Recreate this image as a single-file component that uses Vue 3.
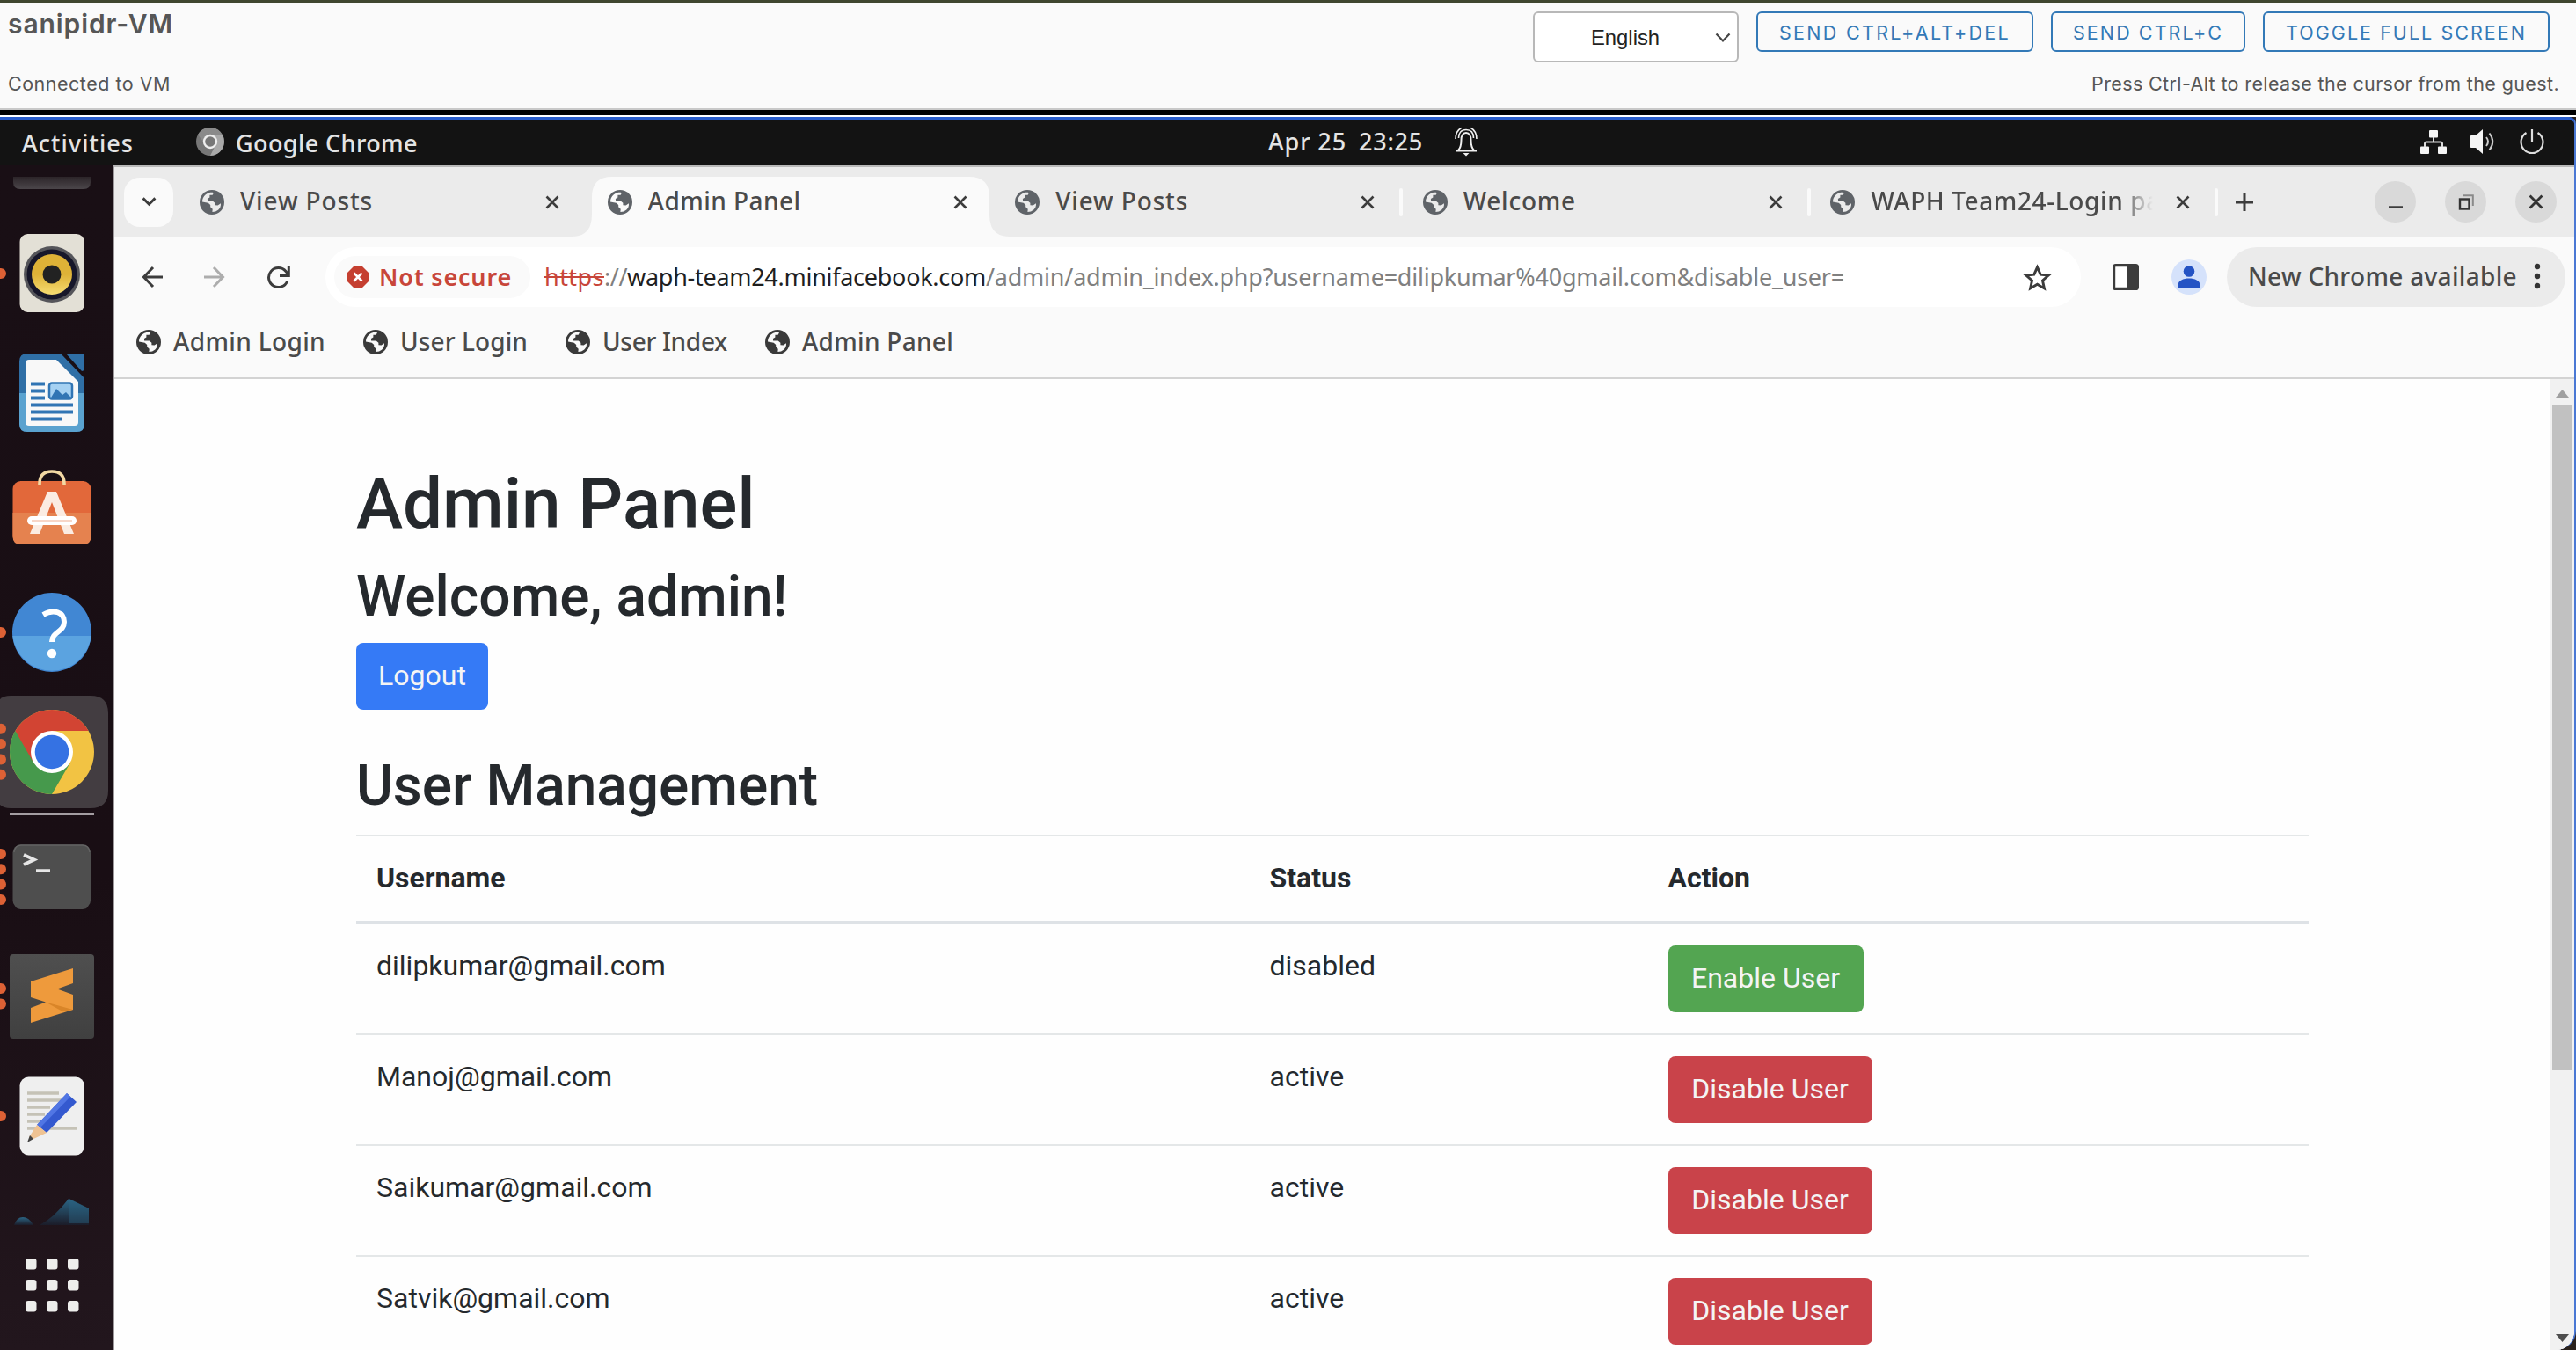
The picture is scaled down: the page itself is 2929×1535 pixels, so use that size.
<script setup>
const tabs = [
  { title: 'View Posts', w: 151 },
  { title: 'Admin Panel', w: 174, active: true },
  { title: 'View Posts', w: 151, sep: true },
  { title: 'Welcome', w: 128, sep: true },
  { title: 'WAPH Team24-Login page', w: 364, sep: true },
]
const bookmarks = [
  { title: 'Admin Login', w: 173 },
  { title: 'User Login', w: 145 },
  { title: 'User Index', w: 142 },
  { title: 'Admin Panel', w: 172 },
]
const users = [
  { name: 'dilipkumar@gmail.com', active: false },
  { name: 'Manoj@gmail.com', active: true },
  { name: 'Saikumar@gmail.com', active: true },
  { name: 'Satvik@gmail.com', active: true },
]
const grid = [0, 1, 2, 3, 4, 5, 6, 7, 8]

// Tracks a label so that it fills the given width.
const vFit = {
  mounted(el, { value }) {
    const natural = el.getBoundingClientRect().width
    const n = el.textContent.length
    el.style.letterSpacing = ((value - natural) / n).toFixed(3) + 'px'
  },
}
</script>

<template>
  <div class="screen">
    <svg width="0" height="0" class="defs">
      <defs>
        <symbol id="globe" viewBox="0 0 28 28">
          <circle cx="14" cy="14" r="14" fill="currentColor" />
          <path d="M3 13.500c0-4.900 3.200-9 7.800-10.300 1.800-.5 3.600-.4 5.200.1l-1.400 2.400h-3.200v2.900l-2.500 1.500.2 2.300 5.600.1 2.700 2.200v2.500l3.200.3 3.400-2.300c.2 3-.8 5.600-2.700 7.300-2 1.700-4.300 2.500-6.900 2.500l.3-3.300-2.500-2.400v-2.300l-2.500-2.300z" fill="var(--hole)" />
        </symbol>
        <symbol id="x" viewBox="0 0 16 16">
          <path d="M1.500 1.500l13 13M14.500 1.500l-13 13" stroke="currentColor" stroke-width="2.600" fill="none" />
        </symbol>
        <linearGradient id="gYellow" x1="0" y1="0" x2="0" y2="1">
          <stop offset=".5" stop-color="#deb237" /><stop offset="1" stop-color="#f6dc72" />
        </linearGradient>
        <linearGradient id="gHill" x1="0" y1="0" x2="0" y2="1">
          <stop offset="0" stop-color="#2b6585" /><stop offset="1" stop-color="#1b1c29" />
        </linearGradient>
        <linearGradient id="gSub" x1="0" y1="0" x2="0" y2="1">
          <stop offset="0" stop-color="#4f4f4f" /><stop offset="1" stop-color="#404040" />
        </linearGradient>
        <linearGradient id="gPart" x1="0" y1="0" x2="0" y2="1">
          <stop offset="0" stop-color="#2c2529" /><stop offset="1" stop-color="#4b464a" />
        </linearGradient>
      </defs>
    </svg>

    <header class="console">
      <div class="console-left">
        <div class="vm-name"><span v-fit="188">sanipidr-VM</span></div>
        <div class="status"><span v-fit="185">Connected to VM</span></div>
      </div>
      <div class="console-right">
        <div class="controls">
          <div class="select">
            <span>English</span>
            <svg width="18" height="12" viewBox="0 0 18 12"><path d="M1.500 1.500L9 9.500l7.500-8" fill="none" stroke="#444" stroke-width="2.200" /></svg>
          </div>
          <button class="ctl b1"><span v-fit="263">SEND CTRL+ALT+DEL</span></button>
          <button class="ctl b2"><span v-fit="171">SEND CTRL+C</span></button>
          <button class="ctl b3"><span v-fit="274">TOGGLE FULL SCREEN</span></button>
        </div>
        <div class="status hint"><span v-fit="532">Press Ctrl-Alt to release the cursor from the guest.</span></div>
      </div>
    </header>

    <div class="guest-frame">
      <div class="guest">
        <div class="topbar">
          <span v-fit="127" class="activities">Activities</span>
          <svg class="app-ico" width="32" height="32" viewBox="0 0 32 32">
            <circle cx="16" cy="16" r="16" fill="#777" />
            <path d="M16 9h14.300A16 16 0 0 1 16 32l6-12z" fill="#a9a9a9" />
            <path d="M2 8a16 16 0 0 1 28.300 1H16l-6 10z" fill="#8a8a8a" />
            <circle cx="16" cy="16" r="8.200" fill="#eee" /><circle cx="16" cy="16" r="5.800" fill="#777" />
          </svg>
          <span v-fit="207">Google Chrome</span>
          <div class="clock">
            <span v-fit="89">Apr 25</span><span v-fit="73" class="time">23:25</span>
            <svg width="28" height="34" viewBox="0 0 28 34" fill="none" stroke="#eee" stroke-width="2">
              <path d="M2 27.500h24M5 27c3-3 3.500-6 3.500-12 0-4.500 2-8 5.500-8s5.500 3.500 5.500 8c0 6 .5 9 3.500 12" />
              <path d="M2 14c0-6 2-10 6.500-12.500M26 14c0-6-2-10-6.500-12.500M5.500 13c0-6 3-9.500 8.500-9.500s8.500 3.500 8.500 9.500" stroke-width="1.600" />
              <path d="M10.500 30h7l-3.500 3.500z" fill="#eee" stroke="none" />
            </svg>
          </div>
          <div class="tray">
            <svg width="30" height="27" viewBox="0 0 30 27" fill="#f4f4f4">
              <rect x="10" y="0" width="10" height="8.500" rx="1" /><rect x="0" y="18.500" width="10" height="8.500" rx="1" /><rect x="20" y="18.500" width="10" height="8.500" rx="1" />
              <path d="M15 8v5.500M5 19v-3.500q0-2 2-2h16q2 0 2 2V19" fill="none" stroke="#ddd" stroke-width="2" />
            </svg>
            <svg width="31" height="28" viewBox="0 0 31 28">
              <path d="M0 9q0-2 2-2h5l8-7v28l-8-7H2q-2 0-2-2z" fill="#f4f4f4" />
              <path d="M19 9q4 5 0 10M22.500 4.500q7.500 9.500 0 19" fill="none" stroke="#ccc" stroke-width="2" />
            </svg>
            <svg width="28" height="28" viewBox="0 0 28 28" fill="none" stroke="#ddd" stroke-width="2.200">
              <path d="M14 0v14M7.500 4a12.500 12.500 0 1 0 13 0" />
            </svg>
          </div>
        </div>

        <div class="desktop">
          <aside class="dock">
            <svg width="129" height="55" viewBox="0 0 129 55"><path d="M15 13h88v6q0 8-8 8H23q-8 0-8-8z" fill="url(#gPart)" /></svg>
            <svg width="129" height="136" viewBox="0 0 129 136">
              <circle cx="1" cy="68" r="6" fill="#dd6135" />
              <rect x="22.500" y="23" width="73.500" height="89" rx="9" fill="#e3e0d6" />
              <circle cx="59" cy="69" r="32" fill="#55555a" /><circle cx="59" cy="69" r="28.500" fill="#17172a" />
              <circle cx="59" cy="69" r="23" fill="url(#gYellow)" /><circle cx="59" cy="69" r="10.500" fill="#222" />
            </svg>
            <svg width="129" height="136" viewBox="0 0 129 136">
              <path d="M31 23h38l27 28v52q0 9-9 9H31q-9 0-9-9V32q0-9 9-9z" fill="#2f6fa6" />
              <path d="M22 68h74v35q0 9-9 9H31q-9 0-9-9z" fill="#5aa2cf" />
              <path d="M75 23h17q4 0 4 4v15l-3 1z" fill="#2f6fa6" />
              <path d="M33 30h31l25 25v46q0 4-4 4H33q-4 0-4-4V34q0-4 4-4z" fill="#f8f8f8" />
              <path d="M35 57.500h16M35 65.500h16M35 73.500h16M35 81.500h48M35 89.500h48M35 97.500h36" stroke="#3175b4" stroke-width="4" />
              <rect x="56" y="56.500" width="26" height="18" rx="3" fill="#a5d1f2" stroke="#3175b4" stroke-width="2.500" />
              <path d="M58 73l6-10 7 7 4-3 6 6v2H58z" fill="#3175b4" />
            </svg>
            <svg width="129" height="136" viewBox="0 0 129 136">
              <rect x="14.500" y="32" width="89" height="72" rx="9" fill="#e2683a" />
              <path d="M14.500 68h89v27q0 9-9 9h-71q-9 0-9-9z" fill="#e5824f" />
              <path d="M45 37v-2q0-14 14-14t14 14v2" fill="none" stroke="#f3d9a4" stroke-width="3.600" />
              <path d="M54 44h10l20 48H73L59 56 45 92H34z" fill="#fbece2" />
              <rect x="31" y="72" width="56" height="10" rx="5" fill="#fff" /><path d="M36 77h46" stroke="#f5c9b4" stroke-width="1.500" />
            </svg>
            <svg width="129" height="136" viewBox="0 0 129 136">
              <circle cx="1" cy="68" r="6" fill="#dd6135" />
              <circle cx="59" cy="68" r="45" fill="#4187d3" /><path d="M14.300 72h89.400a45 45 0 0 1-89.400 0z" fill="#5ba3e0" />
              <path d="M49 48c12-7 24-3 24 8 0 12-14 11-14 23" fill="none" stroke="#fff" stroke-width="6" />
              <circle cx="59" cy="92" r="5.200" fill="#fff" />
            </svg>
            <svg width="129" height="136" viewBox="0 0 129 136">
              <path d="M0 8q4-4 12-4h91q20 0 20 20v88q0 20-20 20H12q-8 0-12-4z" fill="#433d41" />
              <circle v-for="i in 4" :key="i" cx="1" :cy="24.500 + i * 17.300" r="6" fill="#dd6135" />
              <circle cx="59" cy="68" r="48" fill="#f2c343" />
              <path d="M59 68L17.400 44a48 48 0 0 0 41.600 72l21-36z" fill="#46994c" />
              <path d="M59 44h41.600A48 48 0 0 0 17.400 44L38 80l21-12z" fill="#d24433" />
              <circle cx="59" cy="68" r="24" fill="#fff" /><circle cx="59" cy="68" r="19.300" fill="#3572e3" />
            </svg>
            <svg width="129" height="5" viewBox="0 0 129 5"><rect x="11" y="1" width="96" height="3" fill="#a39da1" /></svg>
            <svg width="129" height="136" viewBox="0 0 129 136">
              <circle v-for="i in 4" :key="i" cx="1" :cy="25.700 + i * 17.300" r="6" fill="#dd6135" />
              <rect x="14.500" y="32.500" width="88.500" height="72.500" rx="9" fill="#4e4e4e" />
              <path d="M16 41q1-8 8-8h70q7 0 8 8" fill="none" stroke="#636363" stroke-width="1.500" />
              <path d="M27 44l12 5.500L27 55M41 62h16" fill="none" stroke="#e6e6e6" stroke-width="3.600" />
            </svg>
            <svg width="129" height="137" viewBox="0 0 129 137">
              <circle cx="1" cy="60" r="6" fill="#dd6135" /><circle cx="1" cy="77.500" r="6" fill="#dd6135" />
              <rect x="11" y="21" width="96" height="96" rx="4" fill="url(#gSub)" />
              <path d="M35 52l48-15v17L65 60.500 83 67v17L35 99V82l17-6.500L35 70z" fill="#ee9a3c" />
              <path d="M52 75.500l31 8.500-12 2z" fill="#d98528" />
            </svg>
            <svg width="129" height="136" viewBox="0 0 129 136">
              <circle cx="1" cy="68" r="6" fill="#dd6135" />
              <rect x="22.500" y="23.500" width="73.500" height="89" rx="10" fill="#efefef" />
              <path d="M31 42h36M31 50h40M31 58h26M31 66h20M31 74h16M31 82h56" stroke="#c5c2b6" stroke-width="3.600" />
              <path d="M76 42l11 10-34 35-11-9z" fill="#3459cf" /><path d="M76 42l4 4-34 35-4-3z" fill="#5176e4" />
              <path d="M42 78l11 9-17 8-3-3z" fill="#efc393" /><path d="M34 90l4 4-7 4z" fill="#444" />
            </svg>
            <svg width="129" height="56" viewBox="0 0 129 56">
              <path d="M16 56q3-9 10-9t12 9z" fill="url(#gHill)" /><path d="M45 56q16-8 33-30l23 11v19z" fill="url(#gHill)" /><path d="M79 26l22 11v17H79z" fill="#2a6180" opacity=".45" />
            </svg>
            <svg width="129" height="142" viewBox="0 0 129 142">
              <rect v-for="i in grid" :key="i" :x="29 + (i % 3) * 24" :y="38 + Math.floor(i / 3) * 24" width="12.500" height="12.500" rx="3" fill="#eeeeec" />
            </svg>
          </aside>

          <main class="browser">
            <div class="strip">
              <div class="search-tabs"><svg width="17" height="11" viewBox="0 0 18 12"><path d="M1.500 1.500L9 9l7.500-7.500" fill="none" stroke="#3c3c3c" stroke-width="3.200" /></svg></div>
              <div class="tabs">
                <div v-for="(t, i) in tabs" :key="i" class="tab" :class="{ on: t.active }">
                  <svg v-if="t.active" class="tab-shape" width="498" height="69" viewBox="0 0 498 69"><path d="M0 69Q23 69 23 44V24Q23 1 46 1H452Q475 1 475 24V44Q475 69 498 69z" fill="#fafafa" /></svg>
                  <svg class="globe" width="28" height="28"><use href="#globe" /></svg>
                  <span class="title" :class="{ faded: i === 4 }"><span v-fit="t.w">{{ t.title }}</span></span>
                  <svg class="close" width="16" height="16"><use href="#x" /></svg>
                  <i class="sep" :class="{ show: t.sep }"></i>
                </div>
              </div>
              <svg class="plus" width="20" height="20" viewBox="0 0 20 20"><path d="M10 0v20M0 10h20" stroke="#3c3c3c" stroke-width="3" /></svg>
              <div class="win-btns">
                <div class="wb"><svg width="16" height="16" viewBox="0 0 16 16"><path d="M0 13.500h16" stroke="#3c3c3c" stroke-width="2.400" /></svg></div>
                <div class="wb"><svg width="18" height="18" viewBox="0 0 18 18" fill="none"><path d="M5 1.200h11.800V13" stroke="#8a8a8a" stroke-width="2" /><rect x="2" y="5.500" width="10.500" height="11" stroke="#333" stroke-width="2.400" /></svg></div>
                <div class="wb"><svg width="17" height="17"><use href="#x" /></svg></div>
              </div>
            </div>

            <div class="chrome-body">
              <div class="toolbar">
                <svg class="nav back" width="24" height="26" viewBox="0 0 24 26"><path d="M24 13H3M13 2L2.500 13 13 24" fill="none" stroke="#3c3c3c" stroke-width="3" /></svg>
                <svg class="nav fwd" width="24" height="26" viewBox="0 0 24 26"><path d="M0 13h21M11 2l10.500 11L11 24" fill="none" stroke="#adadad" stroke-width="3" /></svg>
                <svg class="nav" width="27" height="27" viewBox="0 0 27 27"><path d="M23.800 17.500A11 11 0 1 1 22 6.500L25 10" fill="none" stroke="#3c3c3c" stroke-width="3" /><path d="M25.300 1v10.500H15" fill="none" stroke="#3c3c3c" stroke-width="3" /></svg>
                <div class="omnibox">
                  <div class="chip">
                    <svg width="24" height="24" viewBox="0 0 24 24"><path d="M7 0h10l7 7v10l-7 7H7l-7-7V7z" fill="#c53f30" /><path d="M7.500 7.500l9 9M16.500 7.500l-9 9" stroke="#fff" stroke-width="2.600" /></svg>
                    <span v-fit="151">Not secure</span>
                  </div>
                  <div class="url"><span v-fit="68" class="bad">https</span><span v-fit="26">://</span><span v-fit="408" class="host">waph-team24.minifacebook.com</span><span v-fit="976">/admin/admin_index.php?username=dilipkumar%40gmail.com&amp;disable_user=</span></div>
                  <svg class="star" width="33" height="31" viewBox="0 0 33 31"><path d="M16.500 3.800l3.700 8.300 9 .9-6.700 6 1.900 8.900-7.900-4.600-7.900 4.600 1.900-8.900-6.700-6 9-.9z" fill="none" stroke="#3c3c3c" stroke-width="2.900" /></svg>
                </div>
                <svg class="side" width="30" height="30" viewBox="0 0 30 30"><rect x="1.600" y="1.600" width="26.800" height="26.800" rx="2" fill="#fff" stroke="#3c3c3c" stroke-width="3.200" /><path d="M17 1h12v28H17z" fill="#3c3c3c" /></svg>
                <svg class="avatar" width="40" height="40" viewBox="0 0 40 40"><circle cx="20" cy="20" r="20" fill="#d5e2fb" /><circle cx="20" cy="13.500" r="6.300" fill="#2453c4" /><path d="M7.500 32v-3c0-5 6-7.500 12.500-7.500S32.500 24 32.500 29v3z" fill="#2453c4" /></svg>
                <div class="update"><span v-fit="306">New Chrome available</span>
                  <svg width="8" height="30" viewBox="0 0 8 30" fill="#333"><circle cx="4" cy="4" r="3.200" /><circle cx="4" cy="15" r="3.200" /><circle cx="4" cy="26" r="3.200" /></svg></div>
              </div>
              <div class="bookmarks">
                <div v-for="(b, i) in bookmarks" :key="i" class="bm"><svg class="globe dark" width="28" height="28"><use href="#globe" /></svg><span v-fit="b.w">{{ b.title }}</span></div>
              </div>
            </div>

            <div class="viewport">
              <div class="page">
                <h1>Admin Panel</h1>
                <h2>Welcome, admin!</h2>
                <button class="btn primary">Logout</button>
                <h2 class="um">User Management</h2>
                <div class="row head"><span>Username</span><span>Status</span><span>Action</span></div>
                <div v-for="u in users" :key="u.name" class="row">
                  <span>{{ u.name }}</span>
                  <span>{{ u.active ? 'active' : 'disabled' }}</span>
                  <span class="act"><button class="btn" :class="u.active ? 'danger' : 'success'">{{ u.active ? 'Disable User' : 'Enable User' }}</button></span>
                </div>
              </div>
              <div class="scrollbar">
                <svg width="15" height="9" viewBox="0 0 15 9"><path d="M0 9l7.500-9L15 9z" fill="#a0a0a0" /></svg>
                <div class="thumb"></div>
                <svg class="down" width="15" height="9" viewBox="0 0 15 9"><path d="M0 0h15L7.500 9z" fill="#4d4d4d" /></svg>
              </div>
            </div>
          </main>
        </div>
      </div>
    </div>
  </div>
</template>

<style>
html, body { overflow: hidden; background: #2a211c; }
</style>

<style scoped>
* { box-sizing: border-box; }
svg { display: block; flex: none; }
.defs { position: absolute; }
span { white-space: nowrap; }
button { margin: 0; font: inherit; }
.screen { width: 2929px; height: 1535px; overflow: hidden; display: flex; flex-direction: column; border-top: 3px solid #3f4630; }

.console { height: 122px; flex: none; background: #fafafa; border-bottom: 2px solid #c9c9c9; display: flex; justify-content: space-between; font-family: Inter, sans-serif; color: #565656; }
.console-left { padding: 6px 0 0 9px; }
.vm-name { font-size: 30px; line-height: 36px; font-weight: 600; }
.status { font-size: 21.500px; line-height: 28px; margin-top: 36px; }
.console-right { display: flex; flex-direction: column; align-items: flex-end; padding-top: 10px; }
.controls { display: flex; align-items: flex-start; gap: 20px; padding-right: 30px; }
.hint { margin-top: 10px; padding-right: 19px; }
.select { width: 234px; height: 58px; border: 2px solid #b8b8b8; border-radius: 6px; background: #fff; display: flex; align-items: center; justify-content: space-between; padding: 2px 7px 0 64px; font: 23.800px "Liberation Sans", sans-serif; color: #222; }
.ctl { height: 46px; border: 2px solid #3379b7; border-radius: 6px; background: #fafafa; color: #3379b7; font-size: 21.500px; padding: 2px 0 0; display: flex; align-items: center; justify-content: center; }
.b1 { width: 315px; }
.b2 { width: 221px; }
.b3 { width: 326px; }

.guest-frame { flex: 1; min-height: 0; border-top: 6px solid #000; background: #2a211c; }
.guest { height: 1404px; border-top: 4px solid #285ccb; border-right: 2px solid #4a78d4; border-radius: 0 8px 22px 0; overflow: hidden; background: #190f16; }
.guest-frame::before { content: ""; display: block; height: 2px; background: #fff; }
.guest { height: 1402px; }
.topbar { height: 51px; background: #131313; display: flex; align-items: center; padding-left: 25px; color: #e4e4e4; font: 500 27px "Noto Sans", sans-serif; position: relative; }
.app-ico { margin: -3px 13px 0 71px; }
.clock { position: absolute; left: 1442px; top: 3px; display: flex; align-items: center; height: 40px; }
.time { margin-left: 14px; }
.clock svg { margin-left: 35px; margin-top: 1px; }
.tray { margin-left: auto; margin-top: -3px; display: flex; align-items: center; gap: 26px; padding-right: 34px; }

.desktop { display: flex; height: 1347px; }
.dock { width: 129px; flex: none; background: linear-gradient(#190f15 0%, #190e14 60%, #22161d 100%); overflow: hidden; }
.browser { flex: 1; min-width: 0; background: #fff; border-left: 1px solid #9b979a; border-top: 2px solid #b9b9b9; display: flex; flex-direction: column; font: 500 28px "Noto Sans", sans-serif; color: #4a4a4a; }
.strip { height: 79px; flex: none; background: #ebebeb; display: flex; align-items: center; padding-left: 11px; position: relative; }
.search-tabs { width: 56px; height: 56px; border-radius: 18px; background: #fafafa; display: flex; align-items: center; justify-content: center; }
.tabs { display: flex; margin-left: 12px; align-self: stretch; }
.tab { width: 463.600px; display: flex; align-items: center; padding-left: 18px; position: relative; }
.tab-shape { position: absolute; left: -23px; top: 10px; }
.globe { color: #5f6368; --hole: #ebebeb; position: relative; }
.on .globe { --hole: #fafafa; }
.globe.dark { color: #3a3a3a; --hole: #fafafa; }
.title { width: 321px; margin-left: 18px; margin-bottom: 3px; overflow: hidden; position: relative; }
.title span { display: inline-block; }
.faded { -webkit-mask-image: linear-gradient(90deg, #000 88%, transparent 100%); mask-image: linear-gradient(90deg, #000 88%, transparent 100%); }
.close { margin-left: 26px; color: #3c3c3c; position: relative; }
.sep { width: 4px; height: 32px; margin-left: 28px; border-radius: 2px; }
.sep.show { background: #fafafa; }
.plus { margin-left: 15px; }
.win-btns { display: flex; gap: 33px; margin-left: auto; padding-right: 20px; }
.wb { width: 47px; height: 47px; border-radius: 50%; background: #d9d9d9; color: #333; display: flex; align-items: center; justify-content: center; }

.chrome-body { height: 162px; flex: none; background: #fafafa; border-bottom: 2px solid #d3d3d3; }
.toolbar { height: 92px; display: flex; align-items: center; padding: 0 10px 0 31px; }
.back { margin-right: 47px; }
.fwd { margin-right: 47px; }
.omnibox { width: 1996px; height: 68px; border-radius: 34px; background: #fff; margin-left: 40px; display: flex; align-items: center; padding-left: 10px; }
.chip { width: 223px; height: 48px; border-radius: 24px; background: #fafafa; display: flex; align-items: center; gap: 12px; padding-left: 15px; font-weight: 600; font-size: 27px; color: #c8463a; }
.chip span { margin-bottom: 2px; }
.url { margin-left: 16px; font-size: 27px; font-weight: 400; color: #808080; display: flex; margin-top: -2px; }
.bad { color: #c8463a; text-decoration: line-through; text-decoration-thickness: 2px; }
.host { color: #1f1f1f; }
.star { margin-left: auto; margin-right: 33px; }
.side { margin-left: 36px; }
.avatar { margin-left: 37px; }
.update { width: 385px; height: 68px; margin-left: auto; border-radius: 34px; background: #ebebeb; display: flex; align-items: center; justify-content: space-between; padding: 0 28px 2px 24px; }
.bookmarks { display: flex; gap: 43px; padding: 8px 0 0 25px; }
.bm { display: flex; align-items: center; gap: 14px; }
.bm .globe { margin-top: 1px; }

.viewport { flex: 1; min-height: 0; display: flex; background: #fefefe; overflow: hidden; }
.page { width: 2220px; margin-left: 275px; padding-top: 94px; font: 32px/48px Roboto, sans-serif; color: #25292d; }
h1, h2 { margin: 0 0 13px; font-weight: 500; line-height: 1.2; letter-spacing: -.05px; }
h1 { font-size: 80px; margin-bottom: 20px; }
h2 { font-size: 64px; }
.um { margin-top: 49px; margin-bottom: 16px; }
.btn { display: block; height: 76px; padding: 0; border: 0; border-radius: 8px; color: #f4f4f4; font: 32px/74px Roboto, sans-serif; padding-bottom: 2px; }
.primary { background: #357af6; width: 150px; }
.success { background: #53a551; width: 222px; }
.danger { background: #c9434a; width: 232px; }
.row { display: grid; grid-template-columns: 1015px 453px 1fr; padding: 23px 0; height: 126px; border-top: 2px solid #e4e7e8; }
.row > span { padding-left: 23.500px; }
.row > span:first-child { padding-left: 23px; }
.act { padding-top: 1px; }
.row.head { height: 98px; font-weight: 700; }
.row.head + .row { border-top: 4px solid #dee2e6; height: 128px; }
.scrollbar { width: 28px; margin-left: auto; background: #f1f1f1; display: flex; flex-direction: column; align-items: center; padding: 12px 0 9px; }
.thumb { width: 22px; height: 756px; margin-top: 9px; background: #c1c1c1; }
.down { margin-top: auto; }
</style>
